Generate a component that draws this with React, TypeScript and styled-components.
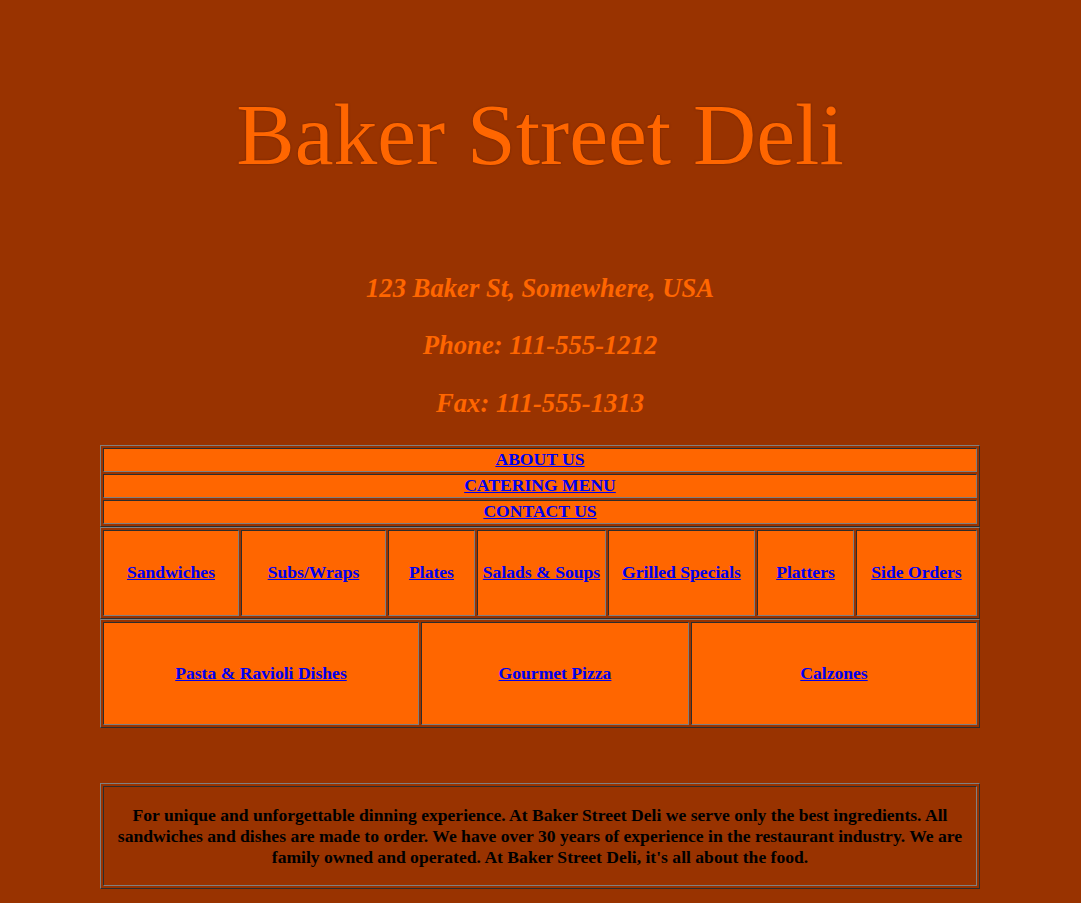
import { FC } from 'react';
import styled, { createGlobalStyle } from 'styled-components';

const GlobalStyle = createGlobalStyle`
  body {
    margin: 0;
    background: #993300;
    font-family: 'Liberation Serif', 'Times New Roman', serif;
  }
`;

const Page = styled.div`
  padding: 85px 1px 16px 0;
`;

const Title = styled.h1`
  margin: 0;
  font-size: 87.5px;
  line-height: 100px;
  font-weight: normal;
  text-align: center;
  color: #ff6600;
  text-shadow: 0 0 2px rgba(60, 20, 0, 0.55);
`;

const Contact = styled.div`
  margin-top: 88px;
  display: flex;
  flex-direction: column;
  gap: 27.3px;
`;

const ContactLine = styled.p`
  margin: 0;
  font-size: 26.67px;
  line-height: 30px;
  font-weight: bold;
  font-style: italic;
  text-align: center;
  color: #ff6600;
`;

const Menu = styled.nav`
  width: 880px;
  margin: 27px auto 0;
`;

const Table = styled.div<{ $columns: string }>`
  display: grid;
  grid-template-columns: ${(p) => p.$columns};
  gap: 2px;
  padding: 2px;
  border: 1px outset grey;
`;

const Cell = styled.div<{ $height: number }>`
  box-sizing: border-box;
  height: ${(p) => p.$height}px;
  padding: 1px;
  border: 1px inset grey;
  background: #ff6600;
  display: flex;
  align-items: center;
  justify-content: center;
  text-align: center;
`;

const Link = styled.a`
  font-size: 17.6px;
  font-weight: bold;
  color: #0000ee;
  text-decoration: underline;
`;

const About = styled.div`
  width: 880px;
  margin: 55px auto 0;
  padding: 2px;
  border: 1px outset grey;
  box-sizing: border-box;
`;

const AboutCell = styled.div`
  padding: 1px;
  border: 1px inset grey;
`;

const AboutText = styled.p`
  margin: 17px 0 16px;
  font-size: 17.6px;
  font-weight: bold;
  text-align: center;
  color: #000;
`;

const mainLinks = ['ABOUT US', 'CATERING MENU', 'CONTACT US'];

const menuLinks = [
  'Sandwiches',
  'Subs/Wraps',
  'Plates',
  'Salads & Soups',
  'Grilled Specials',
  'Platters',
  'Side Orders',
];

const dishLinks = ['Pasta & Ravioli Dishes', 'Gourmet Pizza', 'Calzones'];

const App: FC = () => {
  return (
    <Page>
      <GlobalStyle />
      <Title>Baker Street Deli</Title>

      <Contact>
        <ContactLine>123 Baker St, Somewhere, USA</ContactLine>
        <ContactLine>Phone: 111-555-1212</ContactLine>
        <ContactLine>Fax: 111-555-1313</ContactLine>
      </Contact>

      <Menu>
        <Table $columns='1fr'>
          {mainLinks.map((label) => (
            <Cell key={label} $height={24}>
              <Link href='#'>{label}</Link>
            </Cell>
          ))}
        </Table>
        <Table $columns='136px 145px 87px 129px 147px 97px 121px'>
          {menuLinks.map((label) => (
            <Cell key={label} $height={86}>
              <Link href='#'>{label}</Link>
            </Cell>
          ))}
        </Table>
        <Table $columns='316px 268px 286px'>
          {dishLinks.map((label) => (
            <Cell key={label} $height={103}>
              <Link href='#'>{label}</Link>
            </Cell>
          ))}
        </Table>
      </Menu>

      <About>
        <AboutCell>
          <AboutText>
            For unique and unforgettable dinning experience. At Baker Street Deli we serve only the best
            ingredients. All sandwiches and dishes are made to order. We have over 30 years of experience in
            the restaurant industry. We are family owned and operated. At Baker Street Deli, it's all about the
            food.
          </AboutText>
        </AboutCell>
      </About>
    </Page>
  );
};

export default App;
